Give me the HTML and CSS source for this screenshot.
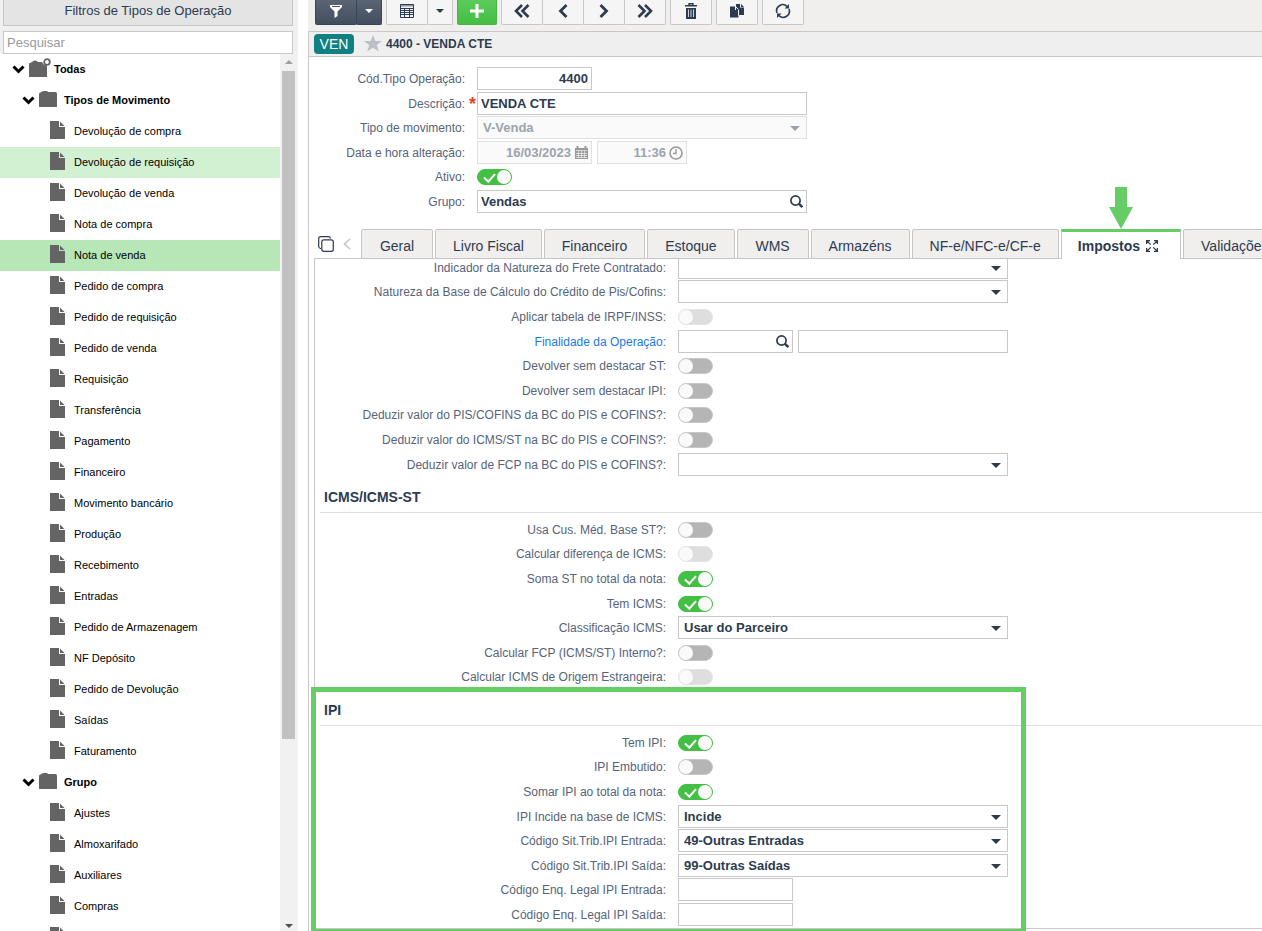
FILE: index.html
```html
<!DOCTYPE html>
<html lang="pt-BR">
<head>
    <meta charset="UTF-8">
    <meta name="viewport" content="width=device-width, initial-scale=1.0">
    <title>Tipos de Operação</title>
    <link rel="stylesheet" href="styles.css">
</head>
<body>
    <!-- Shared icons -->
    <svg class="sprite" aria-hidden="true">
        <symbol id="file" viewBox="0 0 15 18"><path d="M0 0h9v6h6v12H0z"/><path d="M10 0.5L14.5 5H10z"/></symbol>
        <symbol id="folder" viewBox="0 0 18 16"><path d="M0 3Q0 1.500 1.500 1.500L3 .5Q4 0 5 0h3l1 1h7.500Q18 1 18 3v13H0z"/></symbol>
        <symbol id="folder-root" viewBox="0 0 23 20"><path d="M0 6Q0 5 1 5L3 4Q4 2.500 6 2.500T9 4h4q2 4 5 3.500V19H0z"/><circle cx="18" cy="4" r="2.800" fill="none" stroke="#646464" stroke-width="1.800"/></symbol>
        <symbol id="arrow" viewBox="0 0 13 9"><path d="M1.500 1.500l5 5 5-5" fill="none" stroke="#000" stroke-width="3"/></symbol>
        <symbol id="search" viewBox="0 0 13 13"><circle cx="5.500" cy="5.500" r="4.600" fill="none" stroke="#2c3b50" stroke-width="1.700"/><path d="M8.700 8.700l3.600 3.300" stroke="#2c3b50" stroke-width="2.400"/></symbol>
    </svg>

    <div class="app">
        <aside class="sidebar">
            <button class="sidebar-title" type="button">Filtros de Tipos de Operação</button>
            <input class="sidebar-search" type="text" placeholder="Pesquisar" aria-label="Pesquisar">
            <div class="tree-wrap">
                <ul class="tree">
                    <li class="node root"><svg class="arrow"><use href="#arrow"/></svg><svg class="folder-root"><use href="#folder-root"/></svg>Todas</li>
                    <li class="node group"><svg class="arrow"><use href="#arrow"/></svg><svg class="folder"><use href="#folder"/></svg>Tipos de Movimento</li>
                    <li class="node"><svg class="file"><use href="#file"/></svg>Devolução de compra</li>
                    <li class="node hover"><svg class="file"><use href="#file"/></svg>Devolução de requisição</li>
                    <li class="node"><svg class="file"><use href="#file"/></svg>Devolução de venda</li>
                    <li class="node"><svg class="file"><use href="#file"/></svg>Nota de compra</li>
                    <li class="node selected"><svg class="file"><use href="#file"/></svg>Nota de venda</li>
                    <li class="node"><svg class="file"><use href="#file"/></svg>Pedido de compra</li>
                    <li class="node"><svg class="file"><use href="#file"/></svg>Pedido de requisição</li>
                    <li class="node"><svg class="file"><use href="#file"/></svg>Pedido de venda</li>
                    <li class="node"><svg class="file"><use href="#file"/></svg>Requisição</li>
                    <li class="node"><svg class="file"><use href="#file"/></svg>Transferência</li>
                    <li class="node"><svg class="file"><use href="#file"/></svg>Pagamento</li>
                    <li class="node"><svg class="file"><use href="#file"/></svg>Financeiro</li>
                    <li class="node"><svg class="file"><use href="#file"/></svg>Movimento bancário</li>
                    <li class="node"><svg class="file"><use href="#file"/></svg>Produção</li>
                    <li class="node"><svg class="file"><use href="#file"/></svg>Recebimento</li>
                    <li class="node"><svg class="file"><use href="#file"/></svg>Entradas</li>
                    <li class="node"><svg class="file"><use href="#file"/></svg>Pedido de Armazenagem</li>
                    <li class="node"><svg class="file"><use href="#file"/></svg>NF Depósito</li>
                    <li class="node"><svg class="file"><use href="#file"/></svg>Pedido de Devolução</li>
                    <li class="node"><svg class="file"><use href="#file"/></svg>Saídas</li>
                    <li class="node"><svg class="file"><use href="#file"/></svg>Faturamento</li>
                    <li class="node group"><svg class="arrow"><use href="#arrow"/></svg><svg class="folder"><use href="#folder"/></svg>Grupo</li>
                    <li class="node"><svg class="file"><use href="#file"/></svg>Ajustes</li>
                    <li class="node"><svg class="file"><use href="#file"/></svg>Almoxarifado</li>
                    <li class="node"><svg class="file"><use href="#file"/></svg>Auxiliares</li>
                    <li class="node"><svg class="file"><use href="#file"/></svg>Compras</li>
                    <li class="node"><svg class="file"><use href="#file"/></svg></li>
                </ul>
                <div class="scrollbar">
                    <span class="scroll-up"></span>
                    <span class="scroll-track"><span class="scroll-thumb"></span></span>
                    <span class="scroll-down"></span>
                </div>
            </div>
        </aside>

        <main class="main">
            <div class="toolbar">
                <div class="btn-group dark">
                    <button class="btn" type="button" aria-label="Filtro"><svg width="14" height="14" viewBox="0 0 14 14"><path d="M1 1h12v2L8.500 7.500V12L5.500 14V7.500L1 3z" fill="#fff"/><path d="M3 2.500h8" stroke="#4a5566"/></svg></button>
                    <button class="btn narrow" type="button" aria-label="Mais filtros"><span class="caret"></span></button>
                </div>
                <div class="btn-group">
                    <button class="btn" type="button" aria-label="Modo grade"><svg width="14" height="14" viewBox="0 0 14 14"><path d="M.5.5h13v13H.5zM.5 4.500h13M.5 6.500h13M.5 8.500h13M.5 10.500h13M4.500 4v9.500M9.500 4v9.500" fill="none" stroke="#2c3b50"/><path d="M1 1h12v1.500H1z" fill="#8d96a3"/></svg></button>
                    <button class="btn narrow" type="button" aria-label="Mais modos"><span class="caret"></span></button>
                </div>
                <button class="btn green" type="button" aria-label="Adicionar"><svg width="14" height="14" viewBox="0 0 14 14"><path d="M7 0v14M0 7h14" stroke="#fff" stroke-width="3"/></svg></button>
                <div class="btn-group">
                    <button class="btn" type="button" aria-label="Primeiro"><svg width="16" height="14" viewBox="0 0 16 14"><path d="M8 1L2 7l6 6M14.500 1l-6 6 6 6" fill="none" stroke="#2c3b50" stroke-width="2.600"/></svg></button>
                    <button class="btn" type="button" aria-label="Anterior"><svg width="10" height="14" viewBox="0 0 10 14"><path d="M8.500 1l-6 6 6 6" fill="none" stroke="#2c3b50" stroke-width="2.800"/></svg></button>
                    <button class="btn" type="button" aria-label="Próximo"><svg width="10" height="14" viewBox="0 0 10 14"><path d="M1.500 1l6 6-6 6" fill="none" stroke="#2c3b50" stroke-width="2.800"/></svg></button>
                    <button class="btn" type="button" aria-label="Último"><svg width="16" height="14" viewBox="0 0 16 14"><path d="M1.500 1l6 6-6 6M8 1l6 6-6 6" fill="none" stroke="#2c3b50" stroke-width="2.600"/></svg></button>
                </div>
                <button class="btn" type="button" aria-label="Excluir"><svg width="12" height="16" viewBox="0 0 12 16"><path d="M4 2V.7h4V2M0 2.700h12" fill="none" stroke="#2c3b50" stroke-width="1.400"/><path d="M1 5h10v11H1z" fill="#2c3b50"/><path d="M3.500 6.500v7.500M6 6.500v7.500M8.500 6.500v7.500" stroke="#cbd0d7"/></svg></button>
                <button class="btn" type="button" aria-label="Duplicar"><svg width="14" height="14" viewBox="0 0 14 14"><path d="M6 0h4v3.500h4V11H6z" fill="#2c3b50"/><path d="M11 0l3 3h-3z" fill="#2c3b50"/><path d="M0 2.500h5V6h3.500v7.500H0z" fill="#2c3b50"/><path d="M5.500 2.500l3 3M8.500 6v5.500" stroke="#f4f4f4"/></svg></button>
                <button class="btn" type="button" aria-label="Atualizar"><svg width="16" height="16" viewBox="0 0 16 16"><path d="M2 10A6.200 6.200 0 0 1 12 3.300M14 6A6.200 6.200 0 0 1 4 12.700" fill="none" stroke="#2c3b50" stroke-width="1.600"/><path d="M14 1v4.500H9.500zM2 15v-4.500h4.500z" fill="#2c3b50"/></svg></button>
            </div>

            <header class="record">
                <span class="badge">VEN</span>
                <svg width="18" height="17" viewBox="0 0 18 17"><path d="M9 0l2.400 6H18l-5.200 4 2 6.500L9 12.700 3.200 16.500l2-6.500L0 6h6.600z" fill="#bcc0c6"/></svg>
                <strong>4400 - VENDA CTE</strong>
            </header>

            <form class="content">
                <div class="fields header-fields">
                    <label for="codigo">Cód.Tipo Operação:</label>
                    <input class="box short number" id="codigo" type="text" value="4400">
                    <label class="required" for="descricao">Descrição:<span class="asterisk">*</span></label>
                    <input class="box" id="descricao" type="text" value="VENDA CTE">
                    <label for="tipo">Tipo de movimento:</label>
                    <div class="select disabled"><select class="box" id="tipo" disabled><option>V-Venda</option></select></div>
                    <label for="data">Data e hora alteração:</label>
                    <div class="pair">
                        <div class="icon-box short">
                            <input class="box number" id="data" type="text" value="16/03/2023" disabled>
                            <svg width="13" height="13" viewBox="0 0 13 13"><path d="M0 2h13v11H0z" fill="#999"/><path d="M2.500 0v3M10.500 0v3" stroke="#999" stroke-width="2"/><path d="M1 4.500h11M1 7.500h11M1 9.500h11M1 11.500h11M3.500 5v7M6.500 5v7M9.500 5v7" stroke="#f0f0f0" stroke-width=".7"/></svg>
                        </div>
                        <div class="icon-box time">
                            <input class="box number" type="text" value="11:36" aria-label="Hora alteração" disabled>
                            <svg width="14" height="14" viewBox="0 0 14 14"><circle cx="7" cy="7" r="6" fill="none" stroke="#999" stroke-width="1.600"/><path d="M7 3v4.500H4" fill="none" stroke="#999" stroke-width="1.400"/></svg>
                        </div>
                    </div>
                    <label for="ativo">Ativo:</label>
                    <input class="toggle" id="ativo" type="checkbox" checked>
                    <label for="grupo">Grupo:</label>
                    <div class="icon-box"><input class="box" id="grupo" type="text" value="Vendas"><svg width="13" height="13"><use href="#search"/></svg></div>
                </div>

                <nav class="tabs">
                    <svg class="tab-list" width="16" height="16" viewBox="0 0 16 16"><path d="M3 12.500H2.500Q.7 12 .7 10.500V2.500Q.7.7 2.500.7h8Q12 .7 12.500 2.500" fill="none" stroke="#2c3b50" stroke-width="1.200"/><rect x="3.800" y="3.800" width="11.500" height="11.500" rx="2" fill="none" stroke="#2c3b50" stroke-width="1.200"/></svg>
                    <svg class="tab-prev" width="8" height="12" viewBox="0 0 8 12"><path d="M7 1L1.500 6 7 11" fill="none" stroke="#c4c4c4" stroke-width="1.600"/></svg>
                    <button class="tab" type="button">Geral</button>
                    <button class="tab" type="button">Livro Fiscal</button>
                    <button class="tab" type="button">Financeiro</button>
                    <button class="tab" type="button">Estoque</button>
                    <button class="tab" type="button">WMS</button>
                    <button class="tab" type="button">Armazéns</button>
                    <button class="tab" type="button">NF-e/NFC-e/CF-e</button>
                    <button class="tab active" type="button">
                        <svg class="pointer" width="24" height="42" viewBox="0 0 24 42"><path d="M6 0h12v20h6L12 42 0 20h6z" fill="#66cc66"/></svg>
                        Impostos
                        <svg width="12" height="12" viewBox="0 0 12 12"><path d="M.6 4V.6H4M8 .6h3.400V4M11.400 8v3.400H8M4 11.400H.6V8M1 1l3.700 3.700M11 1L7.300 4.700M11 11L7.300 7.300M1 11l3.700-3.700" fill="none" stroke="#2c3b50" stroke-width="1.200"/></svg>
                    </button>
                    <button class="tab" type="button">Validações</button>
                </nav>

                <div class="panel">
                    <div class="fields">
                        <label for="frete">Indicador da Natureza do Frete Contratado:</label>
                        <div class="select"><select class="box" id="frete"><option></option></select></div>
                        <label for="credito">Natureza da Base de Cálculo do Crédito de Pis/Cofins:</label>
                        <div class="select"><select class="box" id="credito"><option></option></select></div>
                        <label for="irpf">Aplicar tabela de IRPF/INSS:</label>
                        <input class="toggle" id="irpf" type="checkbox" disabled>
                        <label class="link" for="finalidade">Finalidade da Operação:</label>
                        <div class="pair">
                            <div class="icon-box short"><input class="box" id="finalidade" type="text"><svg width="13" height="13"><use href="#search"/></svg></div>
                            <input class="box" type="text" aria-label="Descrição da finalidade">
                        </div>
                        <label for="dev-st">Devolver sem destacar ST:</label>
                        <input class="toggle" id="dev-st" type="checkbox">
                        <label for="dev-ipi">Devolver sem destacar IPI:</label>
                        <input class="toggle" id="dev-ipi" type="checkbox">
                        <label for="ded-pis">Deduzir valor do PIS/COFINS da BC do PIS e COFINS?:</label>
                        <input class="toggle" id="ded-pis" type="checkbox">
                        <label for="ded-icms">Deduzir valor do ICMS/ST na BC do PIS e COFINS?:</label>
                        <input class="toggle" id="ded-icms" type="checkbox">
                        <label for="ded-fcp">Deduzir valor de FCP na BC do PIS e COFINS?:</label>
                        <div class="select"><select class="box" id="ded-fcp"><option></option></select></div>
                    </div>

                    <section>
                        <h2>ICMS/ICMS-ST</h2>
                        <div class="fields">
                            <label for="cus-med">Usa Cus. Méd. Base ST?:</label>
                            <input class="toggle" id="cus-med" type="checkbox">
                            <label for="dif-icms">Calcular diferença de ICMS:</label>
                            <input class="toggle" id="dif-icms" type="checkbox" disabled>
                            <label for="soma-st">Soma ST no total da nota:</label>
                            <input class="toggle" id="soma-st" type="checkbox" checked>
                            <label for="tem-icms">Tem ICMS:</label>
                            <input class="toggle" id="tem-icms" type="checkbox" checked>
                            <label for="class-icms">Classificação ICMS:</label>
                            <div class="select"><select class="box" id="class-icms"><option>Usar do Parceiro</option></select></div>
                            <label for="fcp">Calcular FCP (ICMS/ST) Interno?:</label>
                            <input class="toggle" id="fcp" type="checkbox">
                            <label for="origem">Calcular ICMS de Origem Estrangeira:</label>
                            <input class="toggle" id="origem" type="checkbox" disabled>
                        </div>
                    </section>

                    <section class="ipi">
                        <h2>IPI</h2>
                        <div class="fields">
                            <label for="tem-ipi">Tem IPI:</label>
                            <input class="toggle" id="tem-ipi" type="checkbox" checked>
                            <label for="ipi-emb">IPI Embutido:</label>
                            <input class="toggle" id="ipi-emb" type="checkbox">
                            <label for="somar-ipi">Somar IPI ao total da nota:</label>
                            <input class="toggle" id="somar-ipi" type="checkbox" checked>
                            <label for="ipi-base">IPI Incide na base de ICMS:</label>
                            <div class="select"><select class="box" id="ipi-base"><option>Incide</option></select></div>
                            <label for="ipi-ent">Código Sit.Trib.IPI Entrada:</label>
                            <div class="select"><select class="box" id="ipi-ent"><option>49-Outras Entradas</option></select></div>
                            <label for="ipi-sai">Código Sit.Trib.IPI Saída:</label>
                            <div class="select"><select class="box" id="ipi-sai"><option>99-Outras Saídas</option></select></div>
                            <label for="enq-ent">Código Enq. Legal IPI Entrada:</label>
                            <input class="box short" id="enq-ent" type="text">
                            <label for="enq-sai">Código Enq. Legal IPI Saída:</label>
                            <input class="box short" id="enq-sai" type="text">
                        </div>
                        <div class="highlight"></div>
                    </section>
                </div>
            </form>
        </main>
    </div>
</body>
</html>
```

FILE: styles.css
```css
* {
    margin: 0;
    padding: 0;
    box-sizing: border-box;
}

body {
    font-family: "Liberation Sans", Arial, sans-serif;
    font-size: 12px;
    color: #2c3b50;
    background: #fff;
    overflow: hidden;
}

button,
input,
select {
    font-family: inherit;
    color: inherit;
}

svg {
    flex-shrink: 0;
}

.sprite {
    display: none;
}

.app {
    display: flex;
    gap: 10px;
    height: 100vh;
}

/* Sidebar */
.sidebar {
    display: flex;
    flex-direction: column;
    width: 298px;
    flex-shrink: 0;
    background: #f0f0f0;
}

.sidebar-title {
    height: 26px;
    margin: 0 5px 5px 3px;
    padding-bottom: 4px;
    border: 1px solid #c8c4c4;
    border-top: none;
    background: #e4e4e4;
    font-size: 13px;
}

.sidebar-search {
    height: 23px;
    margin: 0 5px 0 3px;
    padding: 0 3px;
    border: 1px solid #c8c8c8;
    font-size: 13px;
}

.sidebar-search::placeholder {
    color: #999;
}

.tree-wrap {
    display: flex;
    flex: 1;
    min-height: 0;
}

.tree {
    flex: 1;
    overflow: hidden;
    background: #fff;
    list-style: none;
}

.node {
    display: flex;
    align-items: center;
    height: 31px;
    padding: 0 0 2px 50px;
    color: #000;
    font-size: 11px;
}

.node svg {
    fill: #646464;
}

.node.root {
    padding-left: 12px;
    font-weight: bold;
}

.node.group {
    padding-left: 22px;
    font-weight: bold;
}

.node.hover {
    background: #d2f0d2;
}

.node.selected {
    background: #b7e7b7;
}

.arrow {
    width: 13px;
    height: 9px;
    margin: 2px 4px 0 0;
}

.folder {
    width: 18px;
    height: 16px;
    margin: 0 7px 1px 0;
}

.folder-root {
    width: 23px;
    height: 20px;
    margin: 0 2px 2px 0;
}

.file {
    width: 15px;
    height: 18px;
    margin: 0 9px 1px 0;
}

.scrollbar {
    display: flex;
    flex-direction: column;
    align-items: center;
    width: 18px;
    padding: 6px 1px 3px 0;
    background: #f1f1f1;
}

.scroll-up,
.scroll-down {
    border: 4px solid transparent;
}

.scroll-up {
    border-top: none;
    border-bottom-color: #a0a0a0;
}

.scroll-down {
    border-bottom: none;
    border-top-color: #505050;
}

.scroll-track {
    flex: 1;
    width: 13px;
    margin: 7px 0;
}

.scroll-thumb {
    display: block;
    height: 79%;
    background: #c1c1c1;
}

/* Toolbar */
.main {
    display: flex;
    flex-direction: column;
    flex: 1;
    min-width: 0;
}

.toolbar {
    display: flex;
    gap: 4px;
    height: 31px;
    padding: 0 7px 6px;
    overflow: hidden;
    background: #f0efee;
}

.btn-group {
    display: flex;
}

.btn {
    display: flex;
    align-items: center;
    justify-content: center;
    width: 42px;
    height: 25px;
    padding-bottom: 3px;
    border: 1px solid #c8c8c8;
    border-top: none;
    border-radius: 0 0 2px 2px;
    background: #f5f5f5;
}

.btn-group .btn + .btn {
    margin-left: -1px;
}

.btn.narrow {
    width: 26px;
}

.btn.green {
    width: 40px;
    border-color: #45b545;
    background: linear-gradient(#5bcb5b, #43bf43);
}

.dark .btn {
    border-color: #3a4658;
    background: linear-gradient(#5a6472, #424e60);
    color: #fff;
}

.caret {
    border: 4px solid transparent;
    border-top-color: currentColor;
    border-bottom: none;
}

/* Record title */
.record {
    display: flex;
    align-items: center;
    height: 26px;
    padding-left: 5px;
    border: 1px solid #c8c8c8;
    border-right: none;
    background: #efefef;
}

.record svg {
    margin-bottom: 2px;
}

.record strong {
    margin-left: 4px;
}

.badge {
    width: 40px;
    margin-right: 10px;
    border-radius: 4px;
    background: #108080;
    color: #fff;
    font-size: 14px;
    line-height: 20px;
    text-align: center;
}

/* Form */
.content {
    flex: 1;
    border-left: 1px solid #c8c8c8;
    min-height: 0;
}

.fields {
    display: grid;
    grid-template-columns: 363px minmax(0, 330px);
    grid-auto-rows: 24px 25px 25px 24px 25px;
    align-items: start;
}

.header-fields {
    grid-template-columns: 168px minmax(0, 330px);
    grid-auto-rows: 25px 24px 25px 24px 25px;
    padding: 10px 0 14px;
}

.fields label {
    padding-right: 12px;
    color: #56637a;
    line-height: 24px;
    text-align: right;
    white-space: nowrap;
}

.fields label.required {
    padding-right: 1px;
}

.fields label.link {
    color: #1a7ae8;
}

.asterisk {
    display: inline-block;
    width: 8px;
    margin-left: 3px;
    color: #e8432e;
    font-size: 18px;
    font-weight: bold;
    line-height: 24px;
    vertical-align: top;
}

.box {
    display: block;
    width: 100%;
    height: 23px;
    padding: 0 3px;
    border: 1px solid #c8c8c8;
    border-radius: 0;
    background: #fff;
    font-size: 13px;
    font-weight: bold;
}

.box:disabled {
    border-color: #e0e0e0;
    background: #fafafa;
    color: #9ba3ae;
    opacity: 1;
}

.short {
    width: 115px;
}

.time {
    width: 90px;
}

.number {
    text-align: right;
}

.pair {
    display: flex;
    gap: 5px;
}

.pair > .short {
    flex-shrink: 0;
}

.select,
.icon-box {
    position: relative;
}

.select .box {
    appearance: none;
    padding-left: 5px;
}

.select::after {
    content: "";
    position: absolute;
    top: 10px;
    right: 7px;
    border: 5px solid transparent;
    border-top-color: #2c3b50;
    border-bottom: none;
    pointer-events: none;
}

.select.disabled::after {
    border-top-color: #9ba3ae;
}

.icon-box svg {
    position: absolute;
    top: 5px;
    right: 4px;
}

.icon-box .number {
    padding-right: 20px;
}

.toggle {
    position: relative;
    appearance: none;
    width: 35px;
    height: 16px;
    margin-top: 4px;
    border: 1px solid #c8c8c8;
    border-radius: 8px;
    background: #b5b5b5;
}

.toggle::after {
    content: "";
    position: absolute;
    top: 0;
    left: 0;
    width: 14px;
    height: 14px;
    border-radius: 50%;
    background: #fafafa;
}

.toggle:checked {
    border-color: #43bf43;
    background: #43bf43;
}

.toggle:checked::after {
    left: 19px;
}

/* Tick mark */
.toggle:checked::before {
    content: "";
    position: absolute;
    top: 1px;
    left: 8px;
    width: 5px;
    height: 9px;
    border: solid #fff;
    border-width: 0 2px 2px 0;
    transform: rotate(42deg);
}

.toggle:disabled {
    border-color: #e4e4e4;
    background: #dedede;
}

/* Tabs */
.tabs {
    position: relative;
    z-index: 1;
    display: flex;
    gap: 2px;
    height: 30px;
    margin-left: 5px;
    background: #fff;
    box-shadow: inset 0 -1px #c8c8c8;
}

.tab-list {
    margin: 7px 7px 0 4px;
}

.tab-prev {
    margin: 9px 8px 0 0;
}

.tab {
    flex-shrink: 0;
    min-width: 72px;
    padding: 3px 17px 0;
    border: 1px solid #c8c4c4;
    border-radius: 2px 2px 0 0;
    background: #f0efee;
    font-size: 14px;
    white-space: nowrap;
}

.tab.active {
    position: relative;
    display: flex;
    align-items: center;
    gap: 6px;
    padding: 1px 22px 0 16px;
    border-top: 3px solid #66cc66;
    border-bottom: none;
    border-radius: 0;
    background: #fff;
    font-weight: bold;
}

/* Arrow that points at the current tab */
.pointer {
    position: absolute;
    bottom: calc(100% + 3px);
    left: 47px;
}

.panel {
    margin: -3px 0 0 5px;
    border: 1px solid #c8c8c8;
    border-top: none;
    border-right: none;
}

h2 {
    height: 36px;
    margin: 0 0 5px 5px;
    padding: 11px 0 0 4px;
    border-bottom: 1px solid #e0e0e0;
    font-size: 14px;
    line-height: 18px;
}

.ipi {
    position: relative;
}

.highlight {
    position: absolute;
    top: -3px;
    bottom: -6px;
    left: -4px;
    width: 715px;
    border: 5px solid #66cc66;
    pointer-events: none;
}
```
